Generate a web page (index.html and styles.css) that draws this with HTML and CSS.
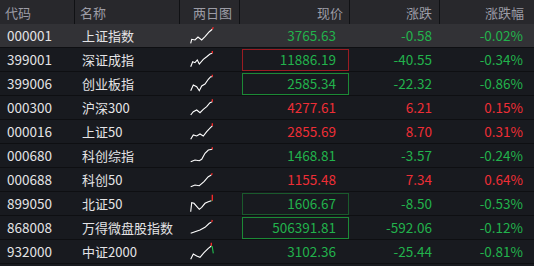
FILE: index.html
```html
<!DOCTYPE html>
<html lang="zh">
<head>
<meta charset="utf-8">
<link rel="stylesheet" href="styles.css">
</head>
<body>
<div class="board">
  <div class="row head">
    <div class="c code">代码</div>
    <div class="c name">名称</div>
    <div class="c chart">两日图</div>
    <div class="c price">现价</div>
    <div class="c chg">涨跌</div>
    <div class="c pct last">涨跌幅</div>
  </div>

  <div class="row sel">
    <div class="c code">000001</div>
    <div class="c name">上证指数</div>
    <div class="c chart"><svg width="26" height="23" viewBox="0 0 26 23"><polyline points="0.7,19.3 1.7,15.3 5,16 8,13 11.7,16 15,12.7 19.3,7.7 22.3,5.3" /><line class="r" x1="22.3" y1="5.3" x2="23.3" y2="3.3"/></svg></div>
    <div class="c price"><span class="v dn">3765.63</span></div>
    <div class="c chg dn">-0.58</div>
    <div class="c pct dn">-0.02%</div>
  </div>

  <div class="row">
    <div class="c code">399001</div>
    <div class="c name">深证成指</div>
    <div class="c chart"><svg width="26" height="23" viewBox="0 0 26 23"><polyline points="0.7,18.7 2.7,13.7 5,14.7 7.3,12 9.3,16 13.3,11.3 16.7,8.7 20,6 22.3,5.3" /><line class="r" x1="22.3" y1="5.3" x2="22.3" y2="3"/></svg></div>
    <div class="c price"><span class="v dn boxr">11886.19</span></div>
    <div class="c chg dn">-40.55</div>
    <div class="c pct dn">-0.34%</div>
  </div>

  <div class="row">
    <div class="c code">399006</div>
    <div class="c name">创业板指</div>
    <div class="c chart"><svg width="26" height="23" viewBox="0 0 26 23"><polyline points="0.7,18.7 3.3,13 6.7,14.7 9.3,18.7 11.7,14 15,12 18.3,7.3 20.7,4.7 22.3,4.7" /><line class="r" x1="22.3" y1="4.7" x2="22.3" y2="2.7"/></svg></div>
    <div class="c price"><span class="v dn boxg">2585.34</span></div>
    <div class="c chg dn">-22.32</div>
    <div class="c pct dn">-0.86%</div>
  </div>

  <div class="row">
    <div class="c code">000300</div>
    <div class="c name">沪深300</div>
    <div class="c chart"><svg width="26" height="23" viewBox="0 0 26 23"><polyline points="0.7,19 3.3,15.7 6.7,14 10,16.7 13.3,13.3 16.7,10.7 20,6.7 22.3,5.7" /><line class="r" x1="22.3" y1="5.7" x2="22.3" y2="3.3"/></svg></div>
    <div class="c price"><span class="v up">4277.61</span></div>
    <div class="c chg up">6.21</div>
    <div class="c pct up">0.15%</div>
  </div>

  <div class="row">
    <div class="c code">000016</div>
    <div class="c name">上证50</div>
    <div class="c chart"><svg width="26" height="23" viewBox="0 0 26 23"><polyline points="0.7,19.3 3.3,15 6.7,16 10,14 13.3,16 16.7,11.7 20.7,7.3 22.3,6" /><line class="r" x1="22.3" y1="6" x2="22.3" y2="3.3"/></svg></div>
    <div class="c price"><span class="v up">2855.69</span></div>
    <div class="c chg up">8.70</div>
    <div class="c pct up">0.31%</div>
  </div>

  <div class="row">
    <div class="c code">000680</div>
    <div class="c name">科创综指</div>
    <div class="c chart"><svg width="26" height="23" viewBox="0 0 26 23"><polyline points="0.7,17.7 5,16 9.3,16.7 11.7,15.3 15,9.3 18.3,6 22.3,5.3" /><line class="r" x1="22.3" y1="5.3" x2="22.3" y2="3.3"/></svg></div>
    <div class="c price"><span class="v dn">1468.81</span></div>
    <div class="c chg dn">-3.57</div>
    <div class="c pct dn">-0.24%</div>
  </div>

  <div class="row">
    <div class="c code">000688</div>
    <div class="c name">科创50</div>
    <div class="c chart"><svg width="26" height="23" viewBox="0 0 26 23"><polyline points="0.7,18.7 5,17 9.3,17.7 14,13.7 18.3,8.7 21.3,7" /><line class="r" x1="21.3" y1="7" x2="22.3" y2="5.3"/></svg></div>
    <div class="c price"><span class="v up">1155.48</span></div>
    <div class="c chg up">7.34</div>
    <div class="c pct up">0.64%</div>
  </div>

  <div class="row">
    <div class="c code">899050</div>
    <div class="c name">北证50</div>
    <div class="c chart"><svg width="26" height="23" viewBox="0 0 26 23"><polyline points="0.7,19.7 1.7,10.7 4,11.3 9.3,17.3 11.7,15.3 15,11.3 18.3,9.7 21.3,8.7" /><line class="g" x1="21.3" y1="8.7" x2="22.3" y2="8.7"/><line class="r" x1="22.3" y1="8.7" x2="22.3" y2="2.7"/></svg></div>
    <div class="c price"><span class="v dn boxd">1606.67</span></div>
    <div class="c chg dn">-8.50</div>
    <div class="c pct dn">-0.53%</div>
  </div>

  <div class="row">
    <div class="c code">868008</div>
    <div class="c name">万得微盘股指数</div>
    <div class="c chart"><svg width="26" height="23" viewBox="0 0 26 23"><polyline points="0.7,17.3 5,15.7 10,14 15,11.3 19.3,7.3 21.3,6.3" /><line class="r" x1="21.7" y1="6" x2="22.3" y2="4"/></svg></div>
    <div class="c price"><span class="v dn boxg">506391.81</span></div>
    <div class="c chg dn">-592.06</div>
    <div class="c pct dn">-0.12%</div>
  </div>

  <div class="row">
    <div class="c code">932000</div>
    <div class="c name">中证2000</div>
    <div class="c chart"><svg width="26" height="23" viewBox="0 0 26 23"><polyline points="0.7,19.3 3.3,14 6.7,16 10,17.3 14,12.7 18.3,8.3 21.3,6" /><line class="r" x1="21.3" y1="6" x2="21.3" y2="2.7"/><polyline class="gl" points="21.3,6 22.3,7 23.3,13.3"/></svg></div>
    <div class="c price"><span class="v dn">3102.36</span></div>
    <div class="c chg dn">-25.44</div>
    <div class="c pct dn">-0.81%</div>
  </div>
</div>
</body>
</html>
```
FILE: styles.css
```css
html, body {
  margin: 0;
  padding: 0;
  background: #181a1f;
}
body {
  width: 534px;
  height: 266px;
  overflow: hidden;
  font-family: "Noto Sans CJK SC", "Noto Sans", sans-serif;
  font-size: 13.5px;
  color: #e4e4e6;
}
.board {
  display: flex;
  flex-direction: column;
}
.row {
  display: grid;
  grid-template-columns: 75px 105px 60px 110px 90px 94px;
  height: 23px;
  border-bottom: 1px solid #0e0f12;
  background: #181a1f;
}
.row.head {
  background: #28282c;
  color: #9c9ca6;
  height: 24px;
  border-bottom: none;
  font-size: 13px;
}
.row.sel {
  background: #323236;
}
.c {
  display: flex;
  align-items: center;
  white-space: nowrap;
  line-height: 1;
}
.head .c {
  border-right: 1px solid #101114;
}
.head .c.last {
  border-right: none;
}
.code { padding-left: 7px; }
.head .code { padding-left: 5px; }
.name { padding-left: 7px; font-size: 13px; }
.head .name { padding-left: 5px; }
.head .chart { justify-content: flex-end; padding-right: 7px; }
.chart { padding-left: 10px; }
.chart svg { display: block; }
.chart polyline {
  fill: none;
  stroke: #ffffff;
  stroke-width: 1.1;
}
.chart line.r { stroke: #ff2a2a; stroke-width: 1.3; }
.chart line.g { stroke: #1fc04f; stroke-width: 1.3; }
.chart polyline.gl { stroke: #1fc04f; }
.price {
  justify-content: stretch;
  padding: 1px 1px 0 2px;
}
.head .price { justify-content: flex-end; padding: 0 6px 0 0; }
.v {
  flex: 1;
  height: 20px;
  display: flex;
  align-items: center;
  justify-content: flex-end;
  padding-right: 12px;
  border: 1px solid transparent;
}
.boxr { border-color: #9a1c22; }
.boxg { border-color: #1c8a36; }
.boxd { border-color: #1a5a2c; }
.chg { justify-content: flex-end; padding-right: 8px; }
.head .chg { padding-right: 7px; }
.pct { justify-content: flex-end; padding-right: 11px; }
.head .pct { padding-right: 10px; }
.up { color: #ee2e36; }
.dn { color: #22b24c; }
```
